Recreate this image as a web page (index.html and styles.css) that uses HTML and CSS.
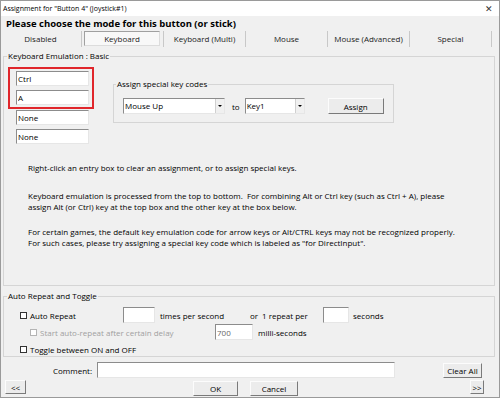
FILE: index.html
```html
<!DOCTYPE html>
<html lang="en">
<head>
  <meta charset="UTF-8">
  <title>Assignment for "Button 4" (Joystick#1)</title>
  <link rel="stylesheet" href="styles.css">
</head>
<body>
  <div class="window">
    <div class="titlebar">
      <span>Assignment for "Button 4" (Joystick#1)</span>
      <span class="close">✕</span>
    </div>

    <div class="heading">Please choose the mode for this button (or stick)</div>

    <div class="tabs">
      <div class="tab">Disabled</div>
      <div class="tab active"><span>Keyboard</span></div>
      <div class="tab">Keyboard (Multi)</div>
      <div class="tab">Mouse</div>
      <div class="tab">Mouse (Advanced)</div>
      <div class="tab">Special</div>
    </div>

    <fieldset class="group kb">
      <legend>Keyboard Emulation : Basic</legend>

      <div class="kb-top">
        <div class="keys">
          <div class="red">
            <input class="field" value="Ctrl" readonly>
            <input class="field" value="A" readonly>
          </div>
          <input class="field" value="None" readonly>
          <input class="field" value="None" readonly>
        </div>

        <fieldset class="group assign">
          <legend>Assign special key codes</legend>
          <div class="assign-row">
            <div class="combo"><span class="val">Mouse Up</span><span class="arrow"></span></div>
            <span class="to">to</span>
            <div class="combo short"><span class="val">Key1</span><span class="arrow"></span></div>
            <button class="btn assign-btn">Assign</button>
          </div>
        </fieldset>
      </div>

      <p class="note n1">Right-click an entry box to clear an assignment, or to assign special keys.</p>
      <p class="note n2">Keyboard emulation is processed from the top to bottom.&nbsp; For combining Alt or Ctrl key (such as Ctrl + A), please<br>assign Alt (or Ctrl) key at the top box and the other key at the box below.</p>
      <p class="note n3">For certain games, the default key emulation code for arrow keys or Alt/CTRL keys may not be recognized properly.<br>For such cases, please try assigning a special key code which is labeled as "for DirectInput".</p>
    </fieldset>

    <fieldset class="group auto">
      <legend>Auto Repeat and Toggle</legend>

      <div class="row r1">
        <input type="checkbox" class="chk">
        <span class="w-auto">Auto Repeat</span>
        <input class="field num" value="" readonly>
        <span class="w-times">times per second</span>
        <span class="w-or">or</span>
        <span class="w-per">1 repeat per</span>
        <input class="field num2" value="" readonly>
        <span class="w-sec">seconds</span>
      </div>

      <div class="row r2">
        <input type="checkbox" class="chk off" disabled>
        <span class="w-delay">Start auto-repeat after certain delay</span>
        <input class="field ms" value="700" readonly>
        <span class="w-sec">milli-seconds</span>
      </div>

      <div class="row r3">
        <input type="checkbox" class="chk">
        <span>Toggle between ON and OFF</span>
      </div>
    </fieldset>

    <div class="comment-row">
      <span class="lbl">Comment:</span>
      <input class="field comment" value="" readonly>
      <button class="btn clear-btn">Clear All</button>
    </div>

    <div class="bottom-row">
      <button class="btn nav first">&lt;&lt;</button>
      <button class="btn ok">OK</button>
      <button class="btn cancel">Cancel</button>
      <button class="btn nav last">&gt;&gt;</button>
    </div>
  </div>
</body>
</html>
```

FILE: styles.css
```css
body {
  margin: 0;
  font-family: "Open Sans", "Noto Sans", sans-serif;
  font-size: 8px;
  color: #000;
}

.window {
  width: 500px;
  height: 398px;
  box-sizing: border-box;
  border: 1px solid #9a9a9a;
  background: #f0f0f0;
}

.titlebar {
  height: 15px;
  background: #fff;
  display: flex;
  align-items: center;
  justify-content: space-between;
  padding: 0 6px 0 2px;
  font-size: 7px;
}

.close {
  font-size: 9px;
  color: #333;
}

.heading {
  margin-top: 1px;
  height: 14px;
  line-height: 14px;
  padding-left: 5px;
  font-size: 9.5px;
  font-weight: bold;
}

/* mode tabs */
.tabs {
  display: flex;
  height: 16px;
  margin-left: -1px;
}

.tab {
  width: 82px;
  box-sizing: border-box;
  border-right: 1px solid #c8c8c8;
  line-height: 16px;
  text-align: center;
  color: #222;
}

.tab.active span {
  display: block;
  margin: 0 3px 0 2px;
  height: 15px;
  line-height: 13px;
  box-sizing: border-box;
  border: 1px solid;
  border-color: #a0a0a0 #dcdcdc #dcdcdc #a0a0a0;
  background: #f8f8f8;
}

/* group boxes */
.group {
  margin: 4px 4px 0 2px;
  padding: 0;
  border: 1px solid #d5d5d5;
  box-sizing: border-box;
  min-width: 0;
}

.group legend {
  margin-left: 3px;
  padding: 0 1px;
  height: 10px;
  line-height: 10px;
}

.kb { height: 235px; }
.auto { margin-top: 5px; height: 66px; }

.kb-top {
  display: flex;
  align-items: flex-start;
  margin-top: 6px;
  padding-left: 4px;
}

.red {
  border: 2px solid #e0262b;
  padding: 2px 3px 2px 6px;
}

.field {
  display: block;
  width: 73px;
  height: 15px;
  box-sizing: border-box;
  margin: 0;
  padding: 0 1px;
  border: 1px solid;
  border-color: #8c8c8c #e6e6e6 #e6e6e6 #8c8c8c;
  background: #fff;
  font: inherit;
  color: #000;
  outline: none;
}

.red .field + .field { margin-top: 4px; }
.keys > .field { margin: 1px 0 0 8px; }
.keys > .field + .field { margin-top: 4px; }

.assign {
  margin: 12px 0 0 19px;
  width: 281px;
  height: 44px;
}

.assign legend { margin-left: 2px; }

.assign-row {
  display: flex;
  align-items: center;
  margin-top: 9px;
  padding-left: 9px;
}

.combo {
  display: flex;
  width: 102px;
  height: 16px;
  box-sizing: border-box;
  border: 1px solid;
  border-color: #8c8c8c #e6e6e6 #e6e6e6 #8c8c8c;
  background: #fff;
}

.combo.short { width: 60px; }

.combo .val {
  flex: 1;
  padding-left: 1px;
  line-height: 14px;
}

.combo .arrow {
  width: 8px;
  display: flex;
  align-items: center;
  justify-content: center;
  background: #f0f0f0;
  border-left: 1px solid #d0d0d0;
}

.combo .arrow::after {
  content: "";
  border-left: 2px solid transparent;
  border-right: 2px solid transparent;
  border-top: 2px solid #000;
}

.to { margin: 0 5px 0 7px; }

.btn {
  margin: 0;
  padding: 0;
  height: 16px;
  box-sizing: border-box;
  border: 1px solid;
  border-color: #fcfcfc #7a7a7a #7a7a7a #fcfcfc;
  background: #ececec;
  font: inherit;
  color: #000;
}

.assign-btn { margin-left: 23px; width: 56px; }

.note {
  margin: 0 0 0 24px;
  line-height: 11px;
  white-space: nowrap;
}

.n1 { margin-top: 18px; }
.n2 { margin-top: 17px; }
.n3 { margin-top: 14px; }

/* auto repeat rows */
.row {
  display: flex;
  align-items: center;
  padding-left: 16px;
}

.r1 { margin-top: 6px; height: 16px; }
.r2 { margin-top: 1px; height: 16px; padding-left: 26px; color: #a0a0a0; }
.r3 { margin-top: 2px; height: 14px; }

.chk {
  appearance: none;
  width: 7px;
  height: 7px;
  box-sizing: border-box;
  margin: 0 3px 0 0;
  border: 1px solid #333;
  background: #fff;
}

.chk.off { border-color: #b4b4b4; }

.row .field { height: 16px; }
.num { width: 32px; }
.num2 { width: 26px; }
.ms { width: 38px; color: #666; }

.w-auto { width: 93px; }
.w-times { width: 90px; margin-left: 5px; }
.w-or { width: 12px; }
.w-per { width: 61px; }
.w-sec { margin-left: 4px; color: #000; }
.w-delay { width: 175px; }
.r2 .w-sec { margin-left: 5px; }

/* bottom */
.comment-row {
  display: flex;
  align-items: center;
  margin-top: 5px;
  height: 16px;
}

.comment-row .lbl {
  width: 91px;
  text-align: right;
}

.comment { margin-left: 5px; width: 298px; height: 16px; }

.clear-btn { margin-left: 48px; width: 39px; height: 15px; }

.bottom-row {
  display: flex;
  align-items: flex-start;
  margin-top: 2px;
}

.nav { width: 21px; height: 14px; }
.first { margin-left: 4px; }
.last { margin-left: 172px; width: 14px; }
.ok { margin: 1px 0 0 167px; width: 45px; height: 15px; }
.cancel { margin: 1px 0 0 12px; width: 48px; height: 15px; }
```
